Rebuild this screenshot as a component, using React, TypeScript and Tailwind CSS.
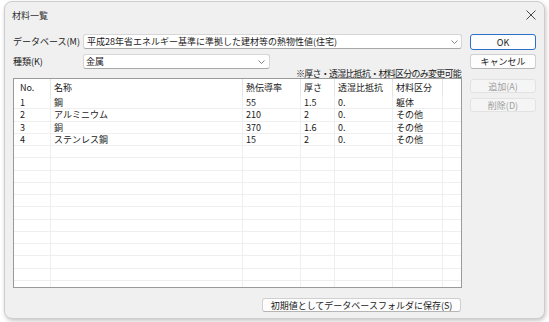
import React from "react";

const F = { fontFamily: '"Noto Sans CJK JP", "Noto Sans", sans-serif' };

const rows = [
  ["1", "鋼", "55", "1.5", "0.", "躯体"],
  ["2", "アルミニウム", "210", "2", "0.", "その他"],
  ["3", "銅", "370", "1.6", "0.", "その他"],
  ["4", "ステンレス鋼", "15", "2", "0.", "その他"],
];

const cols = "grid grid-cols-[37px_192px_58px_34px_58px_50px_1fr]";

function Chevron() {
  return (
    <svg width="7" height="4" viewBox="0 0 7 4" className="shrink-0">
      <path d="M0.5 0.5 L3.5 3.5 L6.5 0.5" fill="none" stroke="#777" strokeWidth="0.9" />
    </svg>
  );
}

function Btn({ children, primary, disabled, className }: { children: React.ReactNode; primary?: boolean; disabled?: boolean; className?: string }) {
  const base = "flex items-center justify-center rounded-[3px] text-[9px] leading-none";
  const look = primary
    ? "border-[1.5px] border-[#2a6fc9] bg-[#fdfdfd] text-[#1a1a1a]"
    : disabled
    ? "border border-[#e2e2e2] bg-[#f5f5f5] text-[#a0a0a0]"
    : "border border-[#d0d0d0] border-b-[#b5b5b5] bg-[#fdfdfd] text-[#1a1a1a]";
  return <div className={`${base} ${look} ${className ?? ""}`}>{children}</div>;
}

export default function App() {
  const emptyRows = Array.from({ length: 13 });
  return (
    <div className="w-[549px] h-[322px] bg-white overflow-hidden pl-[4px] pt-[1px]" style={F}>
      <div className="w-[541px] h-[318px] rounded-[8px] border border-[#cdcdcd] bg-[#f0f0f0] shadow-[1px_2px_4px_rgba(0,0,0,0.22)] flex flex-col">
        {/* title bar */}
        <div className="h-[26px] flex items-center justify-between pl-[7px] pr-[8px] shrink-0">
          <span className="text-[9px] text-[#333] leading-none">材料一覧</span>
          <svg width="10" height="10" viewBox="0 0 10 10">
            <path d="M0.5 0.5 L9.5 9.5 M9.5 0.5 L0.5 9.5" stroke="#333" strokeWidth="0.9" />
          </svg>
        </div>
        {/* body */}
        <div className="flex pl-[8px] pt-[6px] gap-[8px]">
          {/* left column */}
          <div className="w-[449px] flex flex-col">
            <div className="flex items-center h-[15px]">
              <span className="w-[70px] text-[9px] leading-none text-[#1a1a1a]">データベース(M)</span>
              <div className="flex-1 h-[15px] bg-white border border-[#d6d6d6] border-b-[#a8a8a8] rounded-[3px] flex items-center justify-between pl-[3px] pr-[3px]">
                <span className="text-[9px] leading-none text-[#1a1a1a]">平成28年省エネルギー基準に準拠した建材等の熱物性値(住宅)</span>
                <Chevron />
              </div>
            </div>
            <div className="flex items-center h-[15px] mt-[5px]">
              <span className="w-[70px] text-[9px] leading-none text-[#1a1a1a]">種類(K)</span>
              <div className="w-[187px] h-[15px] bg-white border border-[#d6d6d6] border-b-[#a8a8a8] rounded-[3px] flex items-center justify-between pl-[2px] pr-[4px]">
                <span className="text-[9px] leading-none text-[#1a1a1a]">金属</span>
                <Chevron />
              </div>
            </div>
            <div className="h-[9px] text-right text-[9px] leading-[9px] text-[#1a1a1a] pr-[1px] tracking-[-0.75px]">※厚さ・透湿比抵抗・材料区分のみ変更可能</div>
            {/* table */}
            <div className="h-[210px] bg-white border border-[#9a9a9a] overflow-hidden">
              <div className={`${cols} h-[18px] text-[9px] text-[#1a1a1a]`}>
                {["No.", "名称", "熱伝導率", "厚さ", "透湿比抵抗", "材料区分", ""].map((h, i) => (
                  <div key={i} className={`flex items-center h-full ${i === 0 ? "pl-[6px]" : "pl-[3px]"} ${i < 6 ? "border-r border-[#e5e5e5]" : ""}`}>
                    {h}
                  </div>
                ))}
              </div>
              {rows.map((r, ri) => (
                <div key={ri} className={`${cols} h-[12.25px] text-[9px] leading-none text-[#1a1a1a]`}>
                  {[...r, ""].map((c, i) => (
                    <div key={i} className={`flex items-center h-full border-b border-[#efefef] ${i === 0 ? "pl-[6px]" : "pl-[3px]"} ${i < 6 ? "border-r border-r-[#efefef]" : ""}`}>
                      {c}
                    </div>
                  ))}
                </div>
              ))}
              {emptyRows.map((_, ri) => (
                <div key={ri} className={`${cols} h-[12.25px]`}>
                  {Array.from({ length: 7 }).map((__, i) => (
                    <div key={i} className={`h-full border-b border-[#efefef] ${i < 6 ? "border-r border-r-[#efefef]" : ""}`} />
                  ))}
                </div>
              ))}
            </div>
            <div className="flex justify-end mt-[10px] pr-[1px]">
              <Btn className="w-[199px] h-[14px]">初期値としてデータベースフォルダに保存(S)</Btn>
            </div>
          </div>
          {/* right column */}
          <div className="w-[66px] flex flex-col">
            <Btn primary className="h-[16px]">OK</Btn>
            <Btn className="h-[15px] mt-[4px]">キャンセル</Btn>
            <Btn disabled className="h-[14px] mt-[10px]">追加(A)</Btn>
            <Btn disabled className="h-[14px] mt-[5px]">削除(D)</Btn>
          </div>
        </div>
      </div>
    </div>
  );
}
